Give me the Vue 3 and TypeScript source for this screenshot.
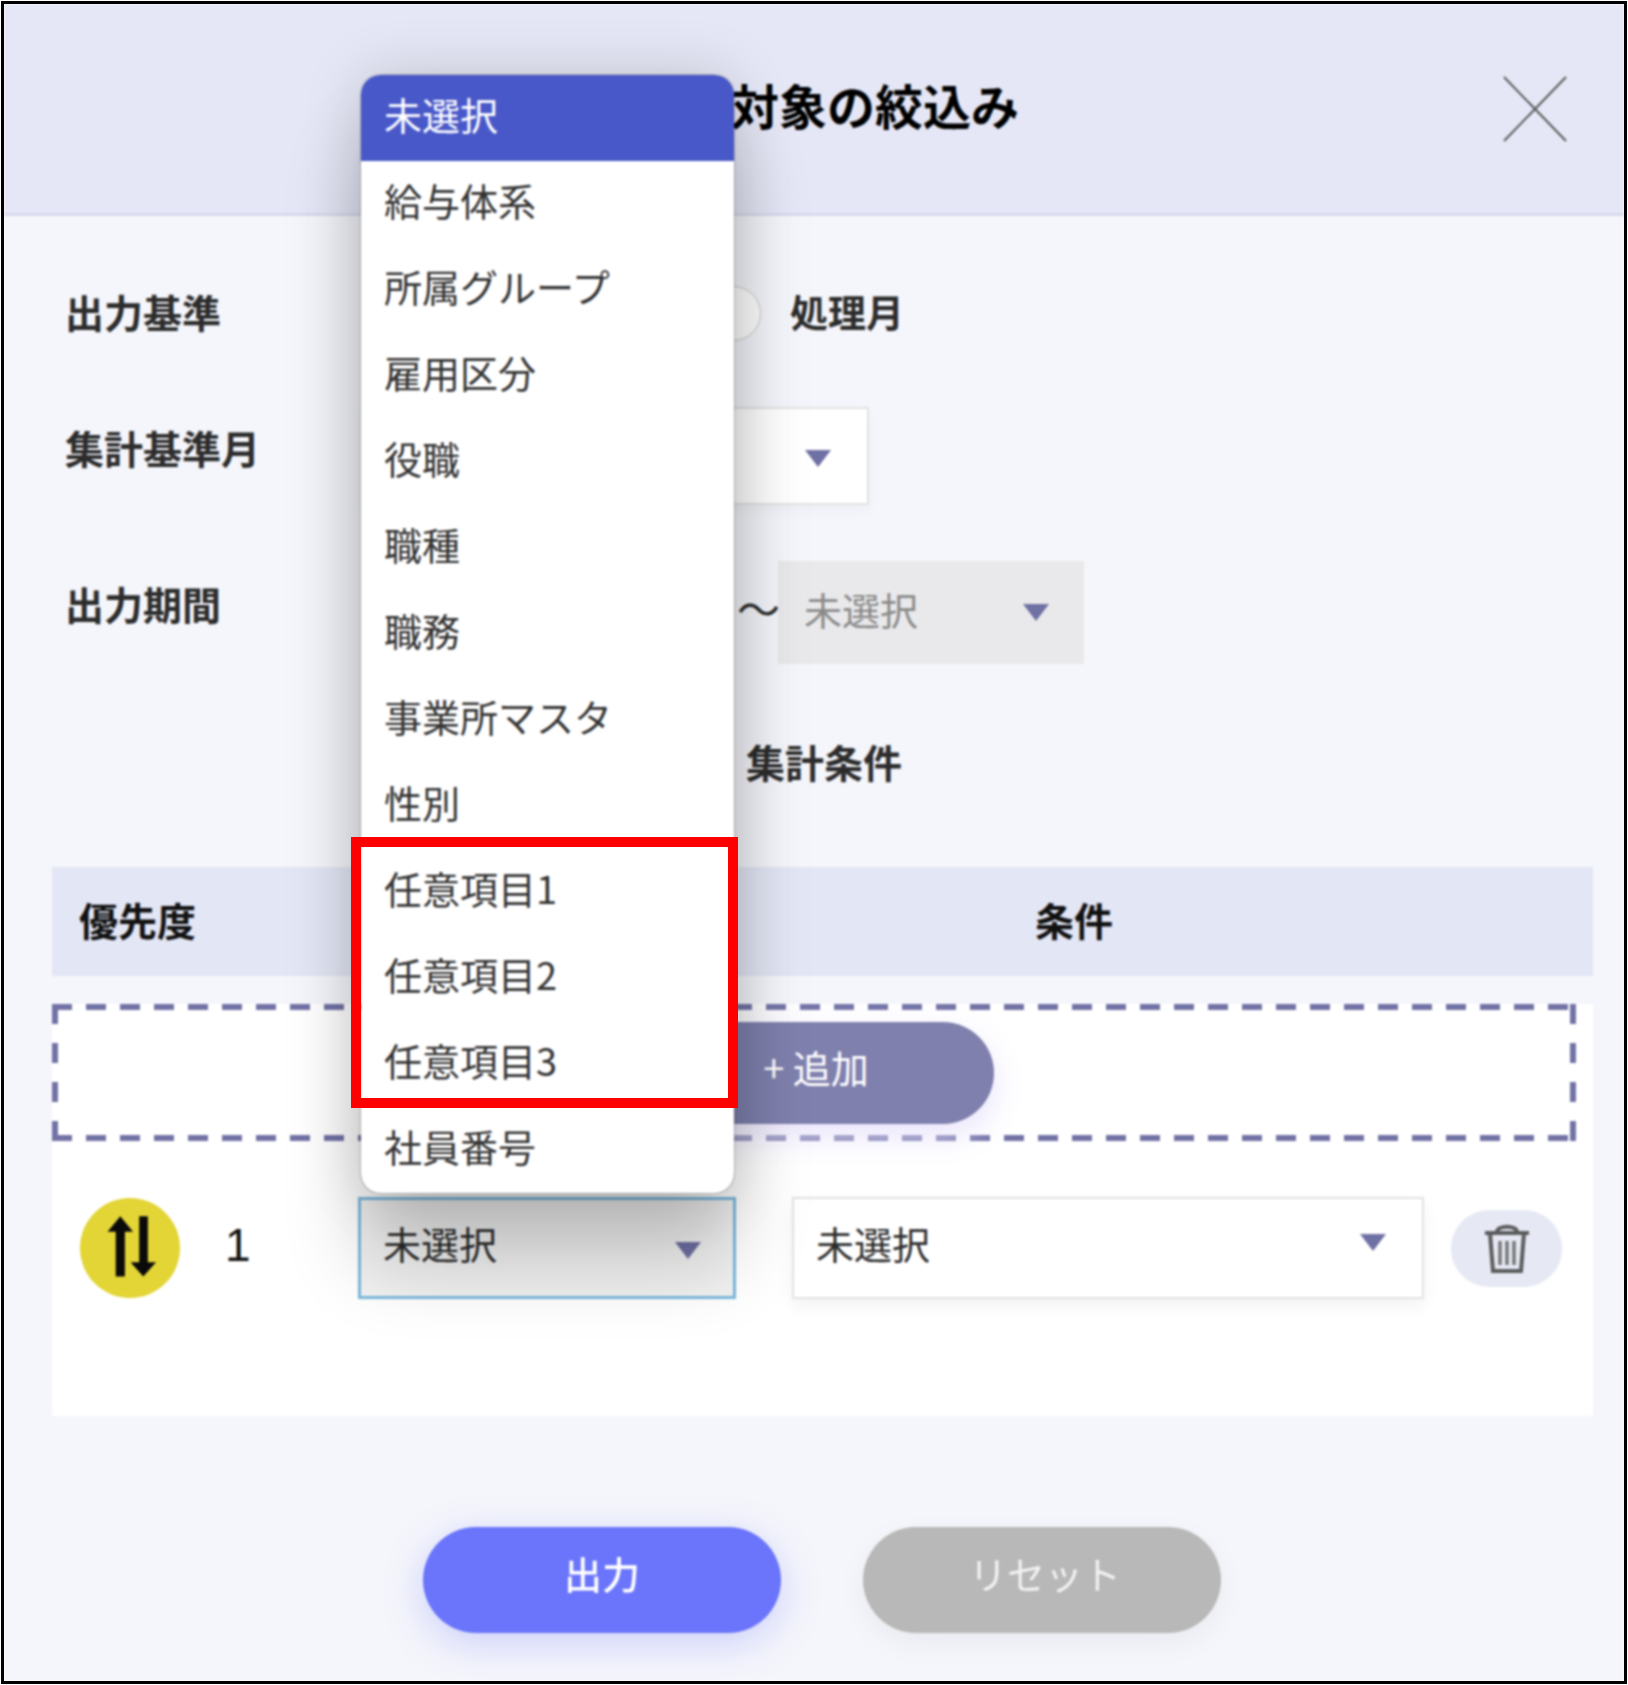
<script setup lang="ts">
const options: string[] = ['未選択','給与体系','所属グループ','雇用区分','役職','職種','職務','事業所マスタ','性別','任意項目1','任意項目2','任意項目3','社員番号']
</script>

<template>
  <div class="frame">
    <div class="screen">
      <header class="head">
        <h1 class="title">対象の絞込み</h1>
        <svg class="close" viewBox="0 0 64 66" width="64" height="66"><path d="M1 1 L63 65 M63 1 L1 65" stroke="#5a5a5a" stroke-width="2" fill="none"/></svg>
      </header>
      <main class="body">
        <div class="row row1">
          <span class="label">出力基準</span>
          <span class="radio"></span>
          <span class="radio-text">処理月</span>
        </div>
        <div class="row row2">
          <span class="label">集計基準月</span>
          <div class="select month"><i class="caret"></i></div>
        </div>
        <div class="row row3">
          <span class="label">出力期間</span>
          <div class="select from"></div>
          <span class="tilde">〜</span>
          <div class="select disabled"><span>未選択</span><i class="caret"></i></div>
        </div>
        <div class="cond-title">集計条件</div>
        <section class="table">
          <div class="thead">
            <span class="th-pri">優先度</span>
            <span class="th-cond">条件</span>
          </div>
          <div class="tbody">
            <div class="dash"><button class="add">+ 追加</button></div>
            <div class="trow">
              <div class="handle">
                <svg viewBox="0 0 98 98" width="100" height="100"><path d="M39.5 18 L52 33 H44 V77 H35 V33 H27 Z M62 77 L49.5 63 H58 V18 H66.5 V63 H74.5 Z" fill="#0a0a0a"/></svg>
              </div>
              <span class="num">1</span>
              <div class="select active"><span>未選択</span><i class="caret"></i></div>
              <div class="select cond"><span>未選択</span><i class="caret"></i></div>
              <div class="trash">
                <svg viewBox="0 0 44 50" width="44" height="50" fill="none" stroke="#5c5c5c" stroke-width="4"><path d="M0 10 H44 M12 9 C12 2 32 2 32 9 M5 10 L8 48 H36 L39 10"/><path d="M15 18 V42 M22 18 V42 M29 18 V42" stroke="#777" stroke-width="3.5"/></svg>
              </div>
            </div>
          </div>
        </section>
        <footer class="foot">
          <button class="btn primary">出力</button>
          <button class="btn reset">リセット</button>
        </footer>
      </main>
      <ul class="menu">
        <li v-for="(o, i) in options" :key="o" :class="{ on: i === 0 }">{{ o }}</li>
      </ul>
    </div>
    <div class="mark"></div>
  </div>
</template>

<style scoped>
.frame {
  position: relative;
  box-sizing: border-box;
  width: 1626px;
  height: 1683px;
  margin: 1px;
  border: 3px solid #000;
  overflow: hidden;
  font-family: "Noto Sans CJK JP", "Noto Sans", sans-serif;
  font-size: 38px;
  color: #2c2c2c;
}
.screen {
  position: relative;
  height: 100%;
  background: #f5f6fb;
  filter: blur(1px);
}
.head {
  height: 212px;
  box-sizing: border-box;
  background: #e5e7f6;
  border-bottom: 3px solid #d9daef;
  position: relative;
}
.title {
  margin: 0;
  padding: 70px 0 0 727px;
  font-size: 48px;
  line-height: 60px;
  font-weight: 700;
  color: #000;
}
.close {
  position: absolute;
  left: 1499px;
  top: 72px;
}
.body { padding: 0 31px 0 48px; }
.row { display: flex; align-items: flex-start; padding-left: 13px; }
.label {
  width: 293px;
  flex: none;
  font-size: 39px;
  font-weight: 700;
  line-height: 48px;
}
.row1 { margin-top: 70px; height: 55px; align-items: center; }
.row1 .label, .radio-text { padding-bottom: 6px; }
.radio {
  box-sizing: border-box;
  width: 55px;
  height: 55px;
  border: 1px solid #c8c8c8;
  border-radius: 50%;
  background: #fff;
  margin-left: 348px;
}
.radio-text { margin-left: 29px; font-weight: 700; }
.row2 { margin-top: 66px; }
.row2 .label { margin-top: 16px; }
.row3 { margin-top: 56px; }
.row3 .label { margin-top: 18px; }
.select {
  box-sizing: border-box;
  position: relative;
  display: flex;
  align-items: center;
  background: #fff;
  border: 2px solid #e2e2e2;
  padding-left: 22px;
  padding-bottom: 12px;
  color: #2c2c2c;
}
.caret {
  position: absolute;
  width: 0;
  height: 0;
  border-left: 13px solid transparent;
  border-right: 13px solid transparent;
  border-top: 17px solid #6f70a3;
}
.month { width: 507px; height: 98px; margin-left: 4px; box-shadow: 0 6px 14px rgba(0,0,0,.03); }
.month .caret { right: 36px; top: 41px; }
.from { width: 366px; height: 103px; margin: 0 9px 0 4px; border: 0; }
.tilde { width: 41px; flex: none; font-size: 43px; line-height: 92px; text-align: center; color: #2c2c2c; }
.disabled {
  width: 306px;
  height: 103px;
  padding-left: 24px;
  padding-bottom: 8px;
  background: #e9e9eb;
  border-color: #e9e9eb;
  color: #8a8a8a;
}
.disabled .caret { right: 33px; top: 41px; }
.cond-title {
  margin: 73px 0 0 694px;
  height: 51px;
  font-size: 39px;
  line-height: 48px;
  font-weight: 700;
}
.table { margin-top: 79px; }
.thead {
  position: relative;
  height: 109px;
  background: #e3e6f5;
  font-size: 39px;
  font-weight: 700;
  line-height: 104px;
}
.th-pri { position: absolute; left: 27px; color: #111; }
.th-cond { position: absolute; left: 983px; color: #111; }
.tbody {
  margin-top: 28px;
  height: 412px;
  background: #fff;
}
.dash {
  width: 1524px;
  height: 137px;
  display: flex;
  align-items: center;
  justify-content: center;
  background:
    repeating-linear-gradient(90deg, #7272a6 0 20px, transparent 20px 34px) 0 0 / 100% 6px no-repeat,
    repeating-linear-gradient(90deg, #7272a6 0 20px, transparent 20px 34px) 0 100% / 100% 6px no-repeat,
    repeating-linear-gradient(180deg, #7272a6 0 20px, transparent 20px 39px) 0 0 / 6px 100% no-repeat,
    repeating-linear-gradient(180deg, #7272a6 0 20px, transparent 20px 39px) 100% 0 / 6px 100% no-repeat;
}
.add {
  width: 360px;
  height: 102px;
  border: 0;
  border-radius: 51px;
  background: #7f80ad;
  color: #fff;
  font: inherit;
  padding: 0 0 12px 4px;
  position: relative;
  z-index: 1;
  box-shadow: 0 12px 32px rgba(232, 226, 252, .95);
}
.trow {
  display: flex;
  align-items: center;
  height: 102px;
  margin-top: 56px;
  padding-left: 28px;
}
.handle {
  width: 100px;
  height: 100px;
  flex: none;
  border-radius: 50%;
  background: #e3d535;
}
.handle svg { display: block; }
.num {
  width: 178px;
  flex: none;
  padding-left: 45px;
  box-sizing: border-box;
  font-size: 46px;
  font-family: "Liberation Sans", sans-serif;
  line-height: 84px;
  padding-bottom: 6px;
  color: #111;
}
.active {
  width: 378px;
  height: 102px;
  border: 3px solid #7cb9dd;
  background: #f2f2f2;
}
.active .caret { right: 32px; top: 42px; }
.cond {
  width: 632px;
  height: 102px;
  margin-left: 56px;
  box-shadow: 0 8px 16px rgba(0,0,0,.05);
}
.cond .caret { right: 36px; top: 35px; }
.trash {
  width: 111px;
  height: 77px;
  margin-left: 27px;
  border-radius: 38px;
  background: #e6e9f4;
  display: flex;
  align-items: center;
  justify-content: center;
}
.foot {
  display: flex;
  gap: 82px;
  margin-top: 111px;
  padding-left: 371px;
}
.btn {
  width: 358px;
  height: 106px;
  border: 0;
  border-radius: 53px;
  color: #fff;
  font: inherit;
  padding: 0 0 15px;
}
.primary {
  background: #6a75fb;
  font-weight: 500;
  box-shadow: 0 10px 40px rgba(106,117,251,.3);
}
.reset {
  background: #b8b8b8;
  color: #f2f2f2;
  padding-left: 6px;
  box-shadow: 0 10px 30px rgba(0,0,0,.05);
}
.menu {
  position: absolute;
  left: 357px;
  top: 71px;
  width: 373px;
  margin: 0;
  padding: 0;
  list-style: none;
  background: #fff;
  border-radius: 20px;
  overflow: hidden;
  z-index: 10;
  box-shadow: 0 0 2px rgba(0,0,0,.6), 0 0 60px rgba(0,0,0,.16), 0 70px 80px rgba(0,0,0,.2);
}
.menu li {
  height: 86px;
  line-height: 78px;
  padding-left: 23px;
  color: #333;
}
.menu li.on { background: #4858c8; color: #fff; }
.mark {
  position: absolute;
  left: 347px;
  top: 833px;
  width: 387px;
  height: 271px;
  box-sizing: border-box;
  border: 10px solid #f00;
  z-index: 20;
}
</style>

<style>
html, body { background: #fff; }
</style>
